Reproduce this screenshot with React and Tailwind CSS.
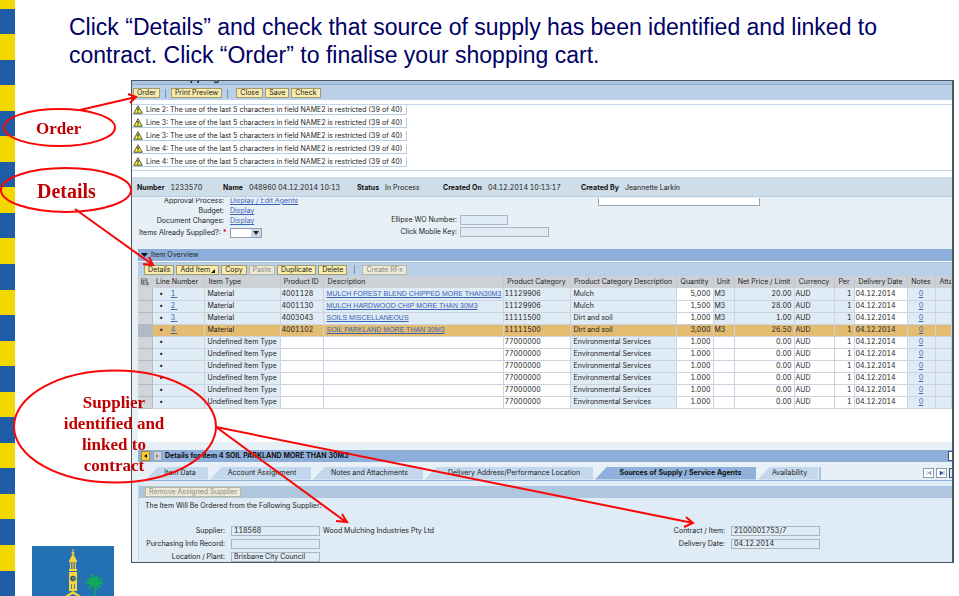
import React from "react";
import clsx from "clsx";

const messages = ["Line 2", "Line 3", "Line 3", "Line 4", "Line 4"];

const columns = [
  "Line Number",
  "Item Type",
  "Product ID",
  "Description",
  "Product Category",
  "Product Category Description",
  "Quantity",
  "Unit",
  "Net Price / Limit",
  "Currency",
  "Per",
  "Delivery Date",
  "Notes",
  "Attachments",
];

const items = [
  { line: "1", id: "4001128", text: "MULCH FOREST BLEND CHIPPED MORE THAN30M3", cat: "11129906", catText: "Mulch", qty: "5,000", price: "20.00" },
  { line: "2", id: "4001130", text: "MULCH HARDWOOD CHIP MORE THAN 30M3", cat: "11129906", catText: "Mulch", qty: "1,500", price: "28.00" },
  { line: "3", id: "4003043", text: "SOILS MISCELLANEOUS", cat: "11111500", catText: "Dirt and soil", qty: "1,000", price: "1.00" },
  { line: "4", id: "4001102", text: "SOIL PARKLAND MORE THAN 30M3", cat: "11111500", catText: "Dirt and soil", qty: "3,000", price: "26.50", selected: true },
  ...Array.from({ length: 6 }, () => ({ cat: "77000000", catText: "Environmental Services", qty: "1.000", price: "0.00" })),
];

function Btn({ children, disabled }) {
  return (
    <button
      type="button"
      disabled={disabled}
      className={clsx(
        "flex h-[10px] items-center whitespace-nowrap border px-[3px]",
        disabled ? "border-[#b9b6a4] bg-[#ece8d8] text-[#8d8b80]" : "border-[#a39a6c] bg-[#f8ebab] text-[#1c1c1c]"
      )}
    >
      {children}
    </button>
  );
}

function Link({ children, className }) {
  return (
    <a href="#" className={clsx("text-[#3a62b5] underline", className)}>
      {children}
    </a>
  );
}

function Divider() {
  return <span className="mx-[5px] h-[9px] w-px bg-[#7d93ad]" />;
}

function Warning() {
  return (
    <svg viewBox="0 0 20 18" className="h-[9px] w-[10px] shrink-0" aria-hidden="true">
      <path d="M10 1.5 18.5 16.5H1.5Z" fill="#f7ef4a" stroke="#55543a" strokeWidth="2" strokeLinejoin="round" />
      <path d="M10 6v5.5M10 13v2" stroke="#222" strokeWidth="2.2" />
    </svg>
  );
}

function Field({ id, label, value = "", labelClass, inputClass }) {
  return (
    <div className="flex items-center">
      <label htmlFor={id} className={clsx("shrink-0 whitespace-nowrap text-right", labelClass)}>
        {label}
      </label>
      <input
        id={id}
        readOnly
        value={value}
        className={clsx("h-[10px] shrink-0 border border-[#a9b6c2] bg-[#dfebf5] px-[2px] text-[#222]", inputClass)}
      />
    </div>
  );
}

function Facts({ label, value, className }) {
  return (
    <div className={clsx("flex gap-[6px] whitespace-nowrap", className)}>
      <dt className="font-bold text-[#111]">{label}</dt>
      <dd>{value}</dd>
    </div>
  );
}

function Tab({ children, className, active }) {
  return (
    <button
      type="button"
      role="tab"
      aria-selected={!!active}
      className={clsx(
        "flex h-[13px] shrink-0 items-center justify-center whitespace-nowrap [clip-path:polygon(0_100%,12px_0,100%_0,100%_100%)]",
        active ? "bg-[#8fb1db] font-bold text-[#111]" : "bg-[#c3d8ec]",
        className
      )}
    >
      {children}
    </button>
  );
}

function ItemTable() {
  return (
    <table className="w-full table-fixed border-collapse whitespace-nowrap">
      <colgroup>
        <col className="w-[14px]" />
        <col className="w-[52px]" />
        <col className="w-[76px]" />
        <col className="w-[43px]" />
        <col className="w-[180px]" />
        <col className="w-[67px]" />
        <col className="w-[106px]" />
        <col className="w-[37px]" />
        <col className="w-[21px]" />
        <col className="w-[60px]" />
        <col className="w-[40px]" />
        <col className="w-[20px]" />
        <col className="w-[53px]" />
        <col className="w-[28px]" />
        <col />
      </colgroup>
      <thead>
        <tr className="h-[12px] bg-[#cdd1d6]">
          <th className="p-0" aria-label="Select">
            <svg viewBox="0 0 20 16" className="ml-[3px] h-[8px] w-[9px]" fill="none" stroke="#555" strokeWidth="1.6" aria-hidden="true">
              <path d="M1 1h12v12H1zM1 5h12M1 9h8M5 5v8M11 8h4v6M15 15l-3-3M15 15l3-3" />
            </svg>
          </th>
          {columns.map((c, i) => (
            <th
              key={c}
              className={clsx(
                "overflow-hidden border-r border-[#c2c7ce] p-0 font-normal",
                i === 2 ? "pr-[4px] text-right" : i < 4 || i === 13 ? "pl-[4px] text-left" : "text-center"
              )}
            >
              {c}
            </th>
          ))}
        </tr>
      </thead>
      <tbody>
        {items.map((r, i) => {
          const sel = r.selected;
          const blue = sel ? "bg-[#e3bc72]" : "bg-[#dfebf5]";
          const open = sel ? "bg-[#e3bc72]" : "bg-white";
          const mixed = r.line ? blue : open;
          const edge = "border-r border-b border-[#ccd3de] p-0 overflow-hidden";
          return (
            <tr key={i} className="h-[12px]">
              <td className={clsx("border-b border-r border-[#b5bac4] p-0", sel ? "bg-[#b1b9c4]" : "bg-[#d2d5da]")} />
              <td className={clsx(edge, blue, "pl-[7px]")}>
                <span className="mr-[8px] font-bold">•</span>
                {r.line && <Link>{r.line}&nbsp;</Link>}
              </td>
              <td className={clsx(edge, blue, "pl-[3px]")}>{r.line ? "Material" : "Undefined Item Type"}</td>
              <td className={clsx(edge, mixed, "pl-px")}>{r.id}</td>
              <td className={clsx(edge, mixed, "pl-[3px]")}>
                {r.text && <Link className="font-['Liberation_Sans',Arial,sans-serif]">{r.text}</Link>}
              </td>
              <td className={clsx(edge, mixed, "pl-px")}>{r.cat}</td>
              <td className={clsx(edge, blue, "pl-[3px]")}>{r.catText}</td>
              <td className={clsx(edge, open, "pr-[2px] text-right")}>{r.qty}</td>
              <td className={clsx(edge, mixed, "pl-px")}>{r.line ? "M3" : ""}</td>
              <td className={clsx(edge, mixed, "pr-[2px] text-right")}>{r.price}</td>
              <td className={clsx(edge, mixed, "pl-px")}>AUD</td>
              <td className={clsx(edge, mixed, "pr-[2px] text-right")}>1</td>
              <td className={clsx(edge, open, "pl-px")}>04.12.2014</td>
              <td className={clsx(edge, blue, "text-center")}>
                <Link>0</Link>
              </td>
              <td className={clsx(edge, blue)} />
            </tr>
          );
        })}
      </tbody>
    </table>
  );
}

function CartWindow() {
  return (
    <section className="min-w-0 flex-1 overflow-hidden border border-r-2 border-[#4c5663] bg-white font-[Inter,'Liberation_Sans',sans-serif] text-[7px] leading-[8px] tabular-nums text-[#222]">
      <div className="flex h-[4px] items-end overflow-hidden border-b border-[#8fa9c6] bg-[#a9c4df] pl-[37px] font-['Liberation_Sans',Arial,sans-serif] text-[11px] font-bold leading-[14px]">
        Shopping Cart
      </div>
      <div className="flex h-[15px] items-center bg-[#b9d0e8] pl-px pt-px">
        <Btn>Order</Btn>
        <Divider />
        <Btn>Print Preview</Btn>
        <Divider />
        <div className="ml-[3px] flex gap-[2px]">
          <Btn>Close</Btn>
          <Btn>Save</Btn>
          <Btn>Check</Btn>
        </div>
      </div>
      <ul className="mt-[4px] flex flex-col gap-[3px] border-y border-[#c3d6ea] pb-[3px]">
        {messages.map((m, i) => (
          <li key={i} className="flex h-[10px] w-[275px] items-center gap-[3px] whitespace-nowrap border-b border-r border-[#b4cce4] pl-px">
            <Warning />
            {m}: The use of the last 5 characters in field NAME2 is restricted (39 of 40)
          </li>
        ))}
      </ul>
      <dl className="mt-[6px] flex h-[20px] items-center border-b border-[#b9cede] bg-[#cfdde8] pl-[5px] pt-[2px]">
        <Facts className="w-[86px]" label="Number" value="1233570" />
        <Facts className="w-[134px]" label="Name" value="048960 04.12.2014 10:13" />
        <Facts className="w-[86px]" label="Status" value="In Process" />
        <Facts className="w-[138px]" label="Created On" value="04.12.2014 10:13:17" />
        <Facts label="Created By" value="Jeannette Larkin" />
      </dl>
      <div className="bg-[#e8f0f7] pt-px">
        <div className="flex h-[51px] overflow-hidden">
          <div className="-mt-[2px] w-[240px] shrink-0">
            {[
              ["Approval Process:", "Display / Edit Agents"],
              ["Budget:", "Display"],
              ["Document Changes:", "Display"],
            ].map(([k, v]) => (
              <div key={k} className="flex h-[10px] items-center gap-[6px] whitespace-nowrap">
                <span className="w-[92px] text-right">{k}</span>
                <Link>{v}</Link>
              </div>
            ))}
            <div className="flex h-[14px] items-center gap-[3px]">
              <label htmlFor="supplied" className="w-[95px] whitespace-nowrap text-right">
                Items Already Supplied?: <span className="font-bold text-red-600">*</span>
              </label>
              <div className="relative">
                <select id="supplied" className="block h-[10px] w-[32px] appearance-none border border-[#8f9dad] bg-white" />
                <span className="pointer-events-none absolute right-px top-px flex h-[8px] w-[10px] items-center justify-center bg-[#c9d9ea]">
                  <svg viewBox="0 0 6 4" className="h-[4px] w-[6px]" aria-hidden="true">
                    <path d="M0 0h6L3 4z" fill="#222" />
                  </svg>
                </span>
              </div>
            </div>
          </div>
          <div className="flex w-[226px] shrink-0 flex-col gap-[2px] pt-[17px]">
            <Field id="ellipse" label="Ellipse WO Number:" labelClass="w-[85px] mr-[3px]" inputClass="w-[48px]" />
            <Field id="mobile" label="Click Mobile Key:" labelClass="w-[85px] mr-[3px]" inputClass="w-[89px]" />
          </div>
          <textarea aria-label="Notes" rows={1} className="block h-[8px] w-[162px] resize-none border border-t-0 border-[#9aa5b0] bg-white" />
        </div>
      </div>
      <div className="border-l-[6px] border-[#e8f0f7]">
        <h2 className="flex h-[12px] items-center gap-[3px] bg-[#8daedb] pl-[3px]">
          <svg viewBox="0 0 7 4" className="h-[4px] w-[7px]" aria-hidden="true">
            <path d="M0 0h7L3.500 4z" fill="#111" />
          </svg>
          Item Overview
        </h2>
        <div className="mt-px flex h-[14px] items-center gap-[2px] border-t border-[#a5bfdc] bg-[#b9d0e8] pl-[6px]">
          <Btn>Details</Btn>
          <Btn>
            Add Item
            <svg viewBox="0 0 4 4" className="ml-px mt-[2px] h-[4px] w-[4px]" aria-hidden="true">
              <path d="M4 0v4H0z" fill="#111" />
            </svg>
          </Btn>
          <Btn>Copy</Btn>
          <Btn disabled>Paste</Btn>
          <Btn>Duplicate</Btn>
          <Btn>Delete</Btn>
          <Divider />
          <Btn disabled>Create RFx</Btn>
        </div>
        <ItemTable />
        <div className="h-[33px] bg-white" />
        <div className="bg-[#e8f0f7] pt-[8px]">
          <h2 className="flex h-[12px] items-center gap-[3px] overflow-hidden bg-[#8daedb] pl-[3px] font-bold text-[#111]">
            <button type="button" aria-label="Previous item" className="flex h-[10px] w-[9px] items-center justify-center border border-[#a38a2c] bg-[#fbcf3c]">
              <svg viewBox="0 0 3 4" className="h-[4px] w-[3px]" aria-hidden="true">
                <path d="M3 0v4L0 2z" fill="#111" />
              </svg>
            </button>
            <button type="button" aria-label="Next item" className="flex h-[10px] w-[9px] items-center justify-center border border-[#9aa6b5] bg-[#cfd3d8]">
              <svg viewBox="0 0 3 4" className="h-[4px] w-[3px]" aria-hidden="true">
                <path d="M0 0v4l3-2z" fill="#888" />
              </svg>
            </button>
            Details for item 4 SOIL PARKLAND MORE THAN 30M3
            <button type="button" aria-label="Close details" className="ml-auto h-[10px] w-[4px] border border-r-0 border-[#44546b] bg-white" />
          </h2>
          <div className="flex items-end border-b border-[#8daedb] pl-[8px] pt-[5px]">
            <div role="tablist" className="flex gap-[2px]">
              <Tab className="w-[62px] pl-[6px]">Item Data</Tab>
              <Tab className="w-[101px] pl-[3px]">Account Assignment</Tab>
              <Tab className="w-[110px] pl-[3px]">Notes and Attachments</Tab>
              <Tab className="w-[168px] pl-[10px]">Delivery Address/Performance Location</Tab>
              <Tab active className="w-[161px] pl-[10px]">Sources of Supply / Service Agents</Tab>
              <Tab className="w-[60px] pl-[3px]">Availability</Tab>
            </div>
            <span className="ml-px h-[13px] w-[2px] bg-[#a9c0da]" />
            <div className="mb-[2px] ml-auto flex gap-[2px]">
              {["M1 0v4M5 0v4L2 2z", "M5 0v4M1 0v4l3-2z"].map((d, i) => (
                <button key={d} type="button" aria-label={i ? "Last tab" : "First tab"} className="flex h-[10px] w-[11px] items-center justify-center border border-[#8c9bb0] bg-white">
                  <svg viewBox="0 0 6 4" className="h-[4px] w-[6px]" fill={i ? "#24508c" : "#98a5b5"} stroke={i ? "#24508c" : "#98a5b5"} strokeWidth="0.600" aria-hidden="true">
                    <path d={d} />
                  </svg>
                </button>
              ))}
              <button type="button" aria-label="Tab list" className="h-[10px] w-[3px] border border-r-0 border-[#44546b] bg-[#dfe6ee]" />
            </div>
          </div>
          <div className="border-l border-[#c3d6ea] bg-[#dfebf5] pt-[5px]">
            <div className="flex h-[12px] items-center bg-[#aec7de] pl-[6px]">
              <Btn disabled>Remove Assigned Supplier</Btn>
            </div>
            <p className="mt-[4px] pl-[6px]">The Item Will Be Ordered from the Following Supplier:</p>
            <div className="mt-[16px] flex">
              <div className="flex w-[501px] shrink-0 flex-col gap-[3px]">
                <div className="flex items-center gap-[3px]">
                  <Field id="supplier" label="Supplier:" value="118568" labelClass="w-[86px] mr-[6px]" inputClass="w-[89px]" />
                  Wood Mulching Industries Pty Ltd
                </div>
                <Field id="info" label="Purchasing Info Record:" labelClass="w-[86px] mr-[6px]" inputClass="w-[89px]" />
                <Field id="plant" label="Location / Plant:" value="Brisbane City Council" labelClass="w-[86px] mr-[6px]" inputClass="w-[89px]" />
              </div>
              <div className="flex flex-col gap-[3px]">
                <Field id="contract" label="Contract / Item:" value="2100001753/7" labelClass="w-[85px] mr-[6px]" inputClass="w-[89px]" />
                <Field id="delivery" label="Delivery Date:" value="04.12.2014" labelClass="w-[85px] mr-[6px]" inputClass="w-[89px]" />
              </div>
            </div>
          </div>
        </div>
      </div>
    </section>
  );
}

function Crest() {
  return (
    <svg viewBox="0 0 82 50" className="block h-[50px] w-[82px]" role="img" aria-label="City council crest">
      <path fill="#2470b5" d="M0 0h82v50H0z" />
      <g fill="#f9d23c">
        <path d="M40.500 3h1v3l1.500 1-1.500 1 3.500 7h-8l3.500-7L39 7l1.500-1z" />
        <path d="M37 15h8v1.500h-8zM38 17h1.200v6H38zM40.400 17h1.200v6h-1.200zM42.800 17H44v6h-1.200zM37 23h8v2h-8zM37 26h8v19h-8z" />
        <path d="M33 50l8-5 8 5h-4l-4-2-4 2z" />
      </g>
      <circle cx="41" cy="32.500" r="2.800" fill="#2b5c80" />
      <path d="M41 31v2h1.500" stroke="#f9d23c" strokeWidth=".7" fill="none" />
      <path d="M39.500 38v5M42.500 38v5" stroke="#2470b5" strokeWidth=".8" />
      <g stroke="#10a85a" fill="none" strokeLinecap="round">
        <path strokeWidth="2.400" d="M62 36l-6-3M62 36l-7 1M62 36l-5 6M62 36l-2-7M62 36l3-6M62 36l7-3M62 36l8 1M62 36l6 5M62 36l2 7" />
        <path strokeWidth="1.800" d="M63 38q1 7 0 13" />
      </g>
      <circle cx="62" cy="36" r="5" fill="#10a85a" />
    </svg>
  );
}

function Annotations() {
  return (
    <div className="pointer-events-none absolute left-0 top-0 font-['Liberation_Serif',serif] font-bold text-[#c00000]">
      <svg width="959" height="596" viewBox="0 0 959 596" fill="none" stroke="#f90606" strokeWidth="2" aria-hidden="true">
        <ellipse cx="59.500" cy="127.500" rx="55.500" ry="18.500" />
        <ellipse cx="66" cy="190" rx="65" ry="22" />
        <ellipse cx="115" cy="426.500" rx="101" ry="56" />
        <path d="M80 110L136 97M128 94l8 3-6 6" />
        <path d="M75 209L153 265M149 257l4 8-10-1" />
        <path d="M216 427L346 522M342 514l5 8-11-1" />
        <path d="M216 427L693 523M686 517l7 6-9 4" />
      </svg>
      <p className="absolute left-[36px] top-[119px] text-[17px] leading-[20px]">Order</p>
      <p className="absolute left-[37px] top-[180px] text-[20px] leading-[22px]">Details</p>
      <p className="absolute left-[54px] top-[392px] w-[120px] text-center text-[17px] leading-[21px]">
        Supplier
        <br />
        identified and
        <br />
        linked to
        <br />
        contract
      </p>
    </div>
  );
}

export default function App() {
  return (
    <main className="relative flex min-h-screen overflow-hidden bg-white font-['Liberation_Sans',Arial,sans-serif]">
      <div className="flex w-[15px] shrink-0 flex-col" aria-hidden="true">
        <div className="flex-[1] bg-[#f2d800]" />
        {Array.from({ length: 23 }, (_, i) => (
          <div key={i} className={clsx("flex-[3]", i % 2 ? "bg-[#f2d800]" : "bg-[#1f5ca6]")} />
        ))}
      </div>
      <div className="flex min-w-0 flex-1 flex-col">
        <h1 className="pb-[11px] pl-[54px] pr-[60px] pt-[13px] text-[23px] leading-[28px] text-[#000066]">
          Click “Details” and check that source of supply has been identified and linked to contract. Click “Order” to finalise your shopping cart.
        </h1>
        <div className="flex flex-1">
          <div className="flex w-[116px] shrink-0 flex-col items-start justify-end pl-[17px]">
            <Crest />
          </div>
          <div className="flex min-w-0 flex-1 items-start pr-[5px]">
            <CartWindow />
          </div>
        </div>
      </div>
      <Annotations />
    </main>
  );
}
